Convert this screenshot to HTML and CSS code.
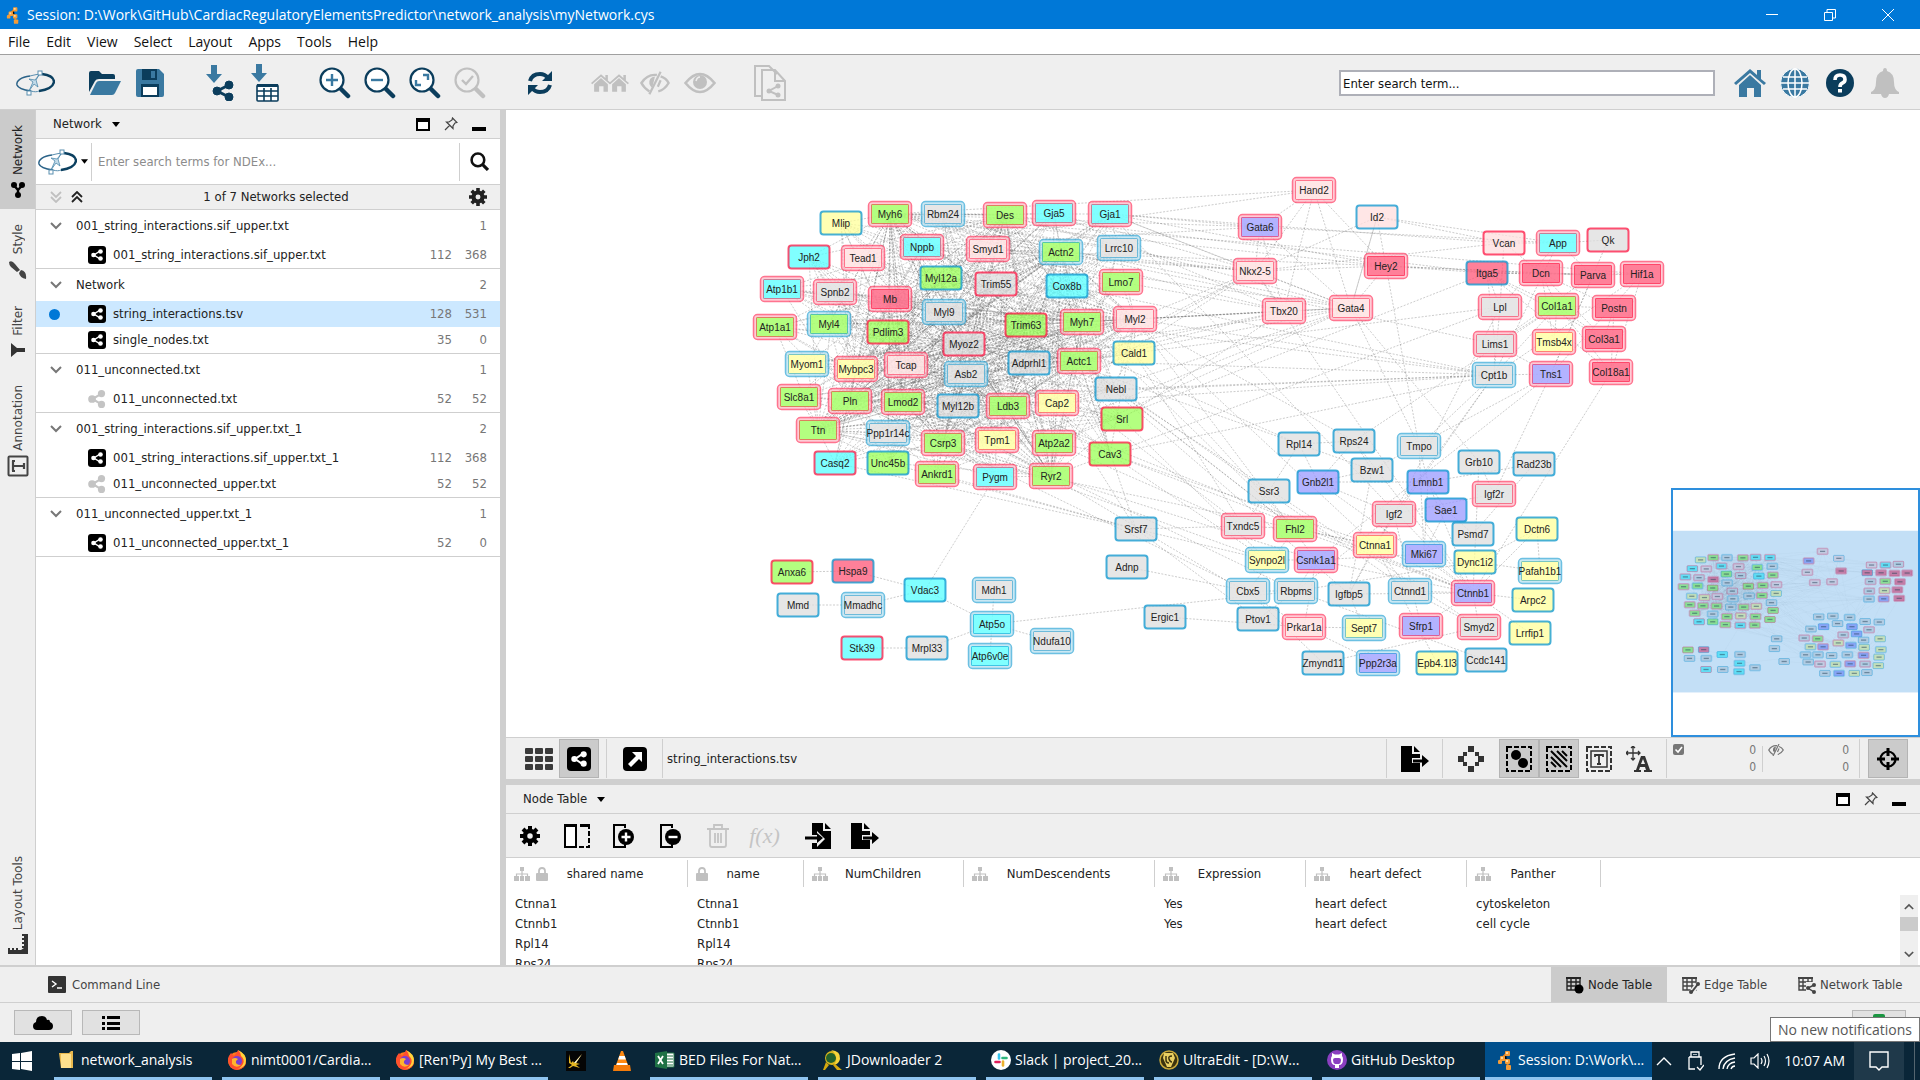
FILE: index.html
```html
<!DOCTYPE html>
<html lang="en">
<head>
<meta charset="utf-8">
<title>Session: D:\Work\GitHub\CardiacRegulatoryElementsPredictor\network_analysis\myNetwork.cys</title>
<link rel="stylesheet" href="styles.css">
</head>
<body>
<svg class="sprite" aria-hidden="true">
  <symbol id="i-cy" viewBox="0 0 16 20"><g stroke="#d9822b" stroke-width="2"><path d="M9 4 5 8l5 3M5 8l-2 3M10 11l1 6"/></g><g fill="#f39c38"><rect x="8" y="1" width="5" height="5" rx="1"/><rect x="3" y="6" width="5" height="5" rx="1"/><rect x="8" y="9" width="5" height="5" rx="1"/><rect x="1" y="10" width="4" height="4" rx="1"/><rect x="9" y="15" width="5" height="5" rx="1"/></g><path d="M9 2h2v2H9zM4 7h2v2H4zM9 10h2v2H9z" fill="#fbd9a0"/></symbol>
  <symbol id="i-ndex" viewBox="0 0 40 26"><g fill="none" stroke="#2a6288"><path d="M15 6C6 7 1 11 2 15c1 3 7 5 14 6" stroke-width="1.500"/><path d="M27 4c8 1 12 4 12 8-1 5-8 8-15 9" stroke="#0b4060" stroke-width="2.400"/><path d="M15 6c4-1 8-2 12-2M16 21c3 1 6 1 8 0" stroke="#5b8fb0" stroke-width="1"/></g><g fill="#fff" stroke="#5b8fb0"><rect x="23" y="1" width="4" height="4"/><rect x="12" y="21" width="4" height="4"/></g><path d="m24 5-3 5 2 7-4-3-5 7 4-9-4-3 6 1z" fill="#c4dcea" stroke="#3b7ca3" stroke-width=".7"/></symbol>
  <symbol id="i-open" viewBox="0 0 32 24"><path d="M0 21V2q0-2 2-2h8l3 3h11q2 0 2 2v3H10q-3 0-4 2z" fill="#0b3d5c"/><path d="M1 24 7 12q1-2 3-2h22l-6 12q-1 2-3 2z" fill="#3a79a1"/></symbol>
  <symbol id="i-save" viewBox="0 0 28 28"><path d="M2 0h21l5 5v21q0 2-2 2H2q-2 0-2-2V2q0-2 2-2z" fill="#3a79a1"/><path d="M6 0h15v11H6zM5 15h18v13H5z" fill="#0b3d5c"/><path d="M15 2h4v7h-4z" fill="#3a79a1"/><path d="M7 18h14v8H7z" fill="#fff"/></symbol>
  <symbol id="i-share" viewBox="0 0 20 20"><path d="M15 4 5 10l10 6" fill="none" stroke="currentColor" stroke-width="2.400"/><circle cx="15" cy="4" r="4" fill="currentColor"/><circle cx="4.500" cy="10" r="4.300" fill="currentColor"/><circle cx="15" cy="16" r="4" fill="currentColor"/></symbol>
  <symbol id="i-impnet" viewBox="0 0 28 36"><path d="M5 0h6v9h5l-8 9-8-9h5z" fill="#3a79a1"/><g fill="#0b3d5c" stroke="#0b3d5c"><path d="m23 20-12 6 12 6" fill="none" stroke-width="3"/><circle cx="23" cy="20" r="4"/><circle cx="11" cy="26" r="4"/><circle cx="23" cy="32" r="4"/></g></symbol>
  <symbol id="i-imptab" viewBox="0 0 28 38"><path d="M5 0h6v9h5l-8 9-8-9h5z" fill="#3a79a1"/><g fill="#fff" stroke="#0b3d5c" stroke-width="1.600"><rect x="6" y="21" width="21" height="16" rx="1"/><path d="M6 27h21M6 32h21M13 24v13M20 24v13"/></g><path d="M6 20h21v3H6z" fill="#0b3d5c"/></symbol>
  <symbol id="i-lens" viewBox="0 0 32 32"><circle cx="13" cy="13" r="11.500" fill="#fff" stroke="currentColor" stroke-width="2.200"/><path d="m22 22 7 7" stroke="currentColor" stroke-width="4.500" stroke-linecap="round"/></symbol>
  <symbol id="i-zin" viewBox="0 0 32 32"><use href="#i-lens"/><path d="M13 7v12M7 13h12" stroke="#3a79a1" stroke-width="2.400"/></symbol>
  <symbol id="i-zout" viewBox="0 0 32 32"><use href="#i-lens"/><path d="M7 13h12" stroke="#3a79a1" stroke-width="2.400"/></symbol>
  <symbol id="i-zfit" viewBox="0 0 32 32"><use href="#i-lens"/><path d="M14 8h5v5M12 18H7v-5" fill="none" stroke="#3a79a1" stroke-width="2.400"/></symbol>
  <symbol id="i-zsel" viewBox="0 0 32 32"><circle cx="13" cy="13" r="11.500" fill="none" stroke="currentColor" stroke-width="2.200"/><path d="m22 22 7 7" stroke="currentColor" stroke-width="4.500" stroke-linecap="round"/><path d="m8 13 4 4 7-8" fill="none" stroke="currentColor" stroke-width="2.400"/></symbol>
  <symbol id="i-refresh" viewBox="0 0 24 24"><g fill="none" stroke="currentColor" stroke-width="4"><path d="M2 10q2-7 10-7 5 0 8 4"/><path d="M22 14q-2 7-10 7-5 0-8-4"/></g><path d="M24 0v10H14zM0 24V14h10z" fill="currentColor"/></symbol>
  <symbol id="i-house" viewBox="0 0 32 28"><path d="M16 0 0 14l2 2L16 4l14 12 2-2-5-4V1h-4v5z" fill="currentColor"/><path d="m16 6 11 10v12h-7v-9h-7v9H5V16z" fill="currentColor"/></symbol>
  <symbol id="i-houses" viewBox="0 0 38 18"><use href="#i-house" x="0" y="0" width="20" height="18"/><use href="#i-house" x="18" y="0" width="20" height="18"/></symbol>
  <symbol id="i-eye" viewBox="0 0 32 22"><path d="M1.500 11Q16-7 30.500 11 16 29 1.500 11z" fill="none" stroke="currentColor" stroke-width="2.600"/><circle cx="16" cy="10" r="7" fill="currentColor"/><path d="M12 9q1-4 4-4" fill="none" stroke="#eee" stroke-width="1.500"/></symbol>
  <symbol id="i-noeye" viewBox="0 0 32 24"><path d="M10 21Q4 17 1.500 12 8 2 18 3.500M22 5q6 2 8.500 7-4 7-11 9" fill="none" stroke="currentColor" stroke-width="2.600"/><path d="M16 5q-7 1-6 8 1 3 3 4z" fill="currentColor"/><path d="M22 0 10 24M19 16l3-7" stroke="currentColor" stroke-width="2.400"/></symbol>
  <symbol id="i-docs" viewBox="0 0 32 36"><g fill="none" stroke="currentColor" stroke-width="2"><path d="M7 31H1V1h14l8 8"/><path d="M8 5h13l10 11v19H8zM21 5v11h10"/><path d="m24 21-9 5 9 4"/></g><g fill="currentColor"><circle cx="24" cy="21" r="2.500"/><circle cx="15" cy="26" r="2.500"/><circle cx="24" cy="30" r="2.500"/></g></symbol>
  <symbol id="i-globe" viewBox="0 0 30 30"><circle cx="15" cy="15" r="14.500" fill="#3a79a1" stroke="#fff"/><g fill="none" stroke="#fff" stroke-width="1.500"><ellipse cx="15" cy="15" rx="7" ry="14"/><path d="M15 1v28M3 9h24M3 21h24M1 15h28"/></g></symbol>
  <symbol id="i-help" viewBox="0 0 28 28"><circle cx="14" cy="14" r="14" fill="#0b3d5c"/><path d="M9 11q0-5 5-5t5 4.500q0 2.500-2.500 3.500T14 18" fill="none" stroke="#fff" stroke-width="3.600"/><path d="M12 20h4v3.500h-4z" fill="#fff"/></symbol>
  <symbol id="i-bell" viewBox="0 0 28 30"><path d="M14 0q2 0 2 3 7 2 7 11 0 8 5 10v2H0v-2q5-2 5-10 0-9 7-11 0-3 2-3zM10 26h8q-1 4-4 4t-4-4z" fill="currentColor"/></symbol>
  <symbol id="i-max" viewBox="0 0 14 13"><path d="M1 1h12v11H1z" fill="#fff" stroke="#000" stroke-width="2"/><path d="M0 0h14v4H0z"/></symbol>
  <symbol id="i-pin" viewBox="0 0 14 14"><path d="m8.500 1 4.500 4.500-2 .5-2 3v2.500L2.500 5H5l3-2zM5.500 8.500 1 13" fill="none" stroke="#444" stroke-width="1.200"/></symbol>
  <symbol id="i-min" viewBox="0 0 14 13"><path d="M0 9h14v4H0z"/></symbol>
  <symbol id="i-search" viewBox="0 0 18 18"><circle cx="7.500" cy="7.500" r="6" fill="none" stroke="#111" stroke-width="2.400"/><path d="m12 12 5 5" stroke="#111" stroke-width="3"/></symbol>
  <symbol id="i-gear" viewBox="0 0 20 20"><circle cx="10" cy="10" r="5" fill="none" stroke="currentColor" stroke-width="4.500"/><path d="M10 0v4M10 16v4M0 10h4M16 10h4M3 3l3 3M14 14l3 3M17 3l-3 3M6 14l-3 3" stroke="currentColor" stroke-width="4"/></symbol>
  <symbol id="i-dbl" viewBox="0 0 12 12"><path d="m1 6 5-5 5 5M1 11l5-5 5 5" fill="none" stroke="currentColor" stroke-width="1.800"/></symbol>
  <symbol id="i-chev" viewBox="0 0 12 8"><path d="m1 1 5 5 5-5" fill="none" stroke="currentColor" stroke-width="2"/></symbol>
  <symbol id="i-caret" viewBox="0 0 8 5"><path d="M0 0h8L4 5z"/></symbol>
  <symbol id="i-sharebox" viewBox="0 0 18 18"><rect width="18" height="18" rx="3"/><path d="M12 5 6 9l6 4" fill="none" stroke="#fff" stroke-width="1.500"/><g fill="#fff"><circle cx="12.500" cy="5.500" r="2.300"/><circle cx="5.500" cy="9" r="2.300"/><circle cx="12.500" cy="12.500" r="2.300"/></g></symbol>
  <symbol id="i-tabnet" viewBox="0 0 14 16"><path d="m2.500 3 4.500 5v5M11.500 3 7 8" fill="none" stroke="#000" stroke-width="2.400"/><circle cx="3" cy="3" r="3"/><circle cx="11" cy="3" r="3"/><circle cx="7" cy="13" r="3"/></symbol>
  <symbol id="i-brush" viewBox="0 0 18 18"><path d="M0 1q3-2 6 2l5 6-3 2-6-5Q0 4 0 1zM12 9q6 1 5 9-6-1-7-6z" fill="#444"/></symbol>
  <symbol id="i-funnel" viewBox="0 0 14 14"><path d="M0 0v14l6-5h8V5H6z" fill="#333"/></symbol>
  <symbol id="i-annot" viewBox="0 0 22 22"><rect x="1.500" y="1.500" width="19" height="19" rx="1" fill="none" stroke="#444" stroke-width="2"/><path d="M6 6v10M6 11h11M17 8v6M5 6h3M5 16h3" stroke="#444" stroke-width="2.200" fill="none"/></symbol>
  <symbol id="i-ruler" viewBox="0 0 20 20"><path d="M14 0h6v20H0v-6h2v2h2v-2h2v2h2v-2h2v2h3L16 14h-2v-2h2v-2h-2V8h2V6h-2V4h2V2h-2z" fill="#333"/></symbol>
  <symbol id="i-grid" viewBox="0 0 28 22"><g fill="#3a3a3a"><rect width="8" height="6" rx="1"/><rect x="10" width="8" height="6" rx="1"/><rect x="20" width="8" height="6" rx="1"/><rect y="8" width="8" height="6" rx="1"/><rect x="10" y="8" width="8" height="6" rx="1"/><rect x="20" y="8" width="8" height="6" rx="1"/><rect y="16" width="8" height="6" rx="1"/><rect x="10" y="16" width="8" height="6" rx="1"/><rect x="20" y="16" width="8" height="6" rx="1"/></g></symbol>
  <symbol id="i-ext" viewBox="0 0 24 24"><rect width="24" height="24" rx="4"/><path d="M9 5h10v10l-3-3-8 8-3-3 8-8z" fill="#fff"/></symbol>
  <symbol id="i-export" viewBox="0 0 28 26"><path d="M0 0h11v8h8v4h-8v5h8v9H0z"/><path d="M13 0l6 6h-6zM12 13.500h9V9l7 6-7 6v-4.500h-9z"/></symbol>
  <symbol id="i-import" viewBox="0 0 26 26"><path d="M7 0h11v8h8v18H7v-6h5v4l8-8-8-8v4H7zM20 0l6 6h-6z"/><path d="M0 13.500h12V10l6 5-6 5v-3.500H0z"/></symbol>
  <symbol id="i-diamond" viewBox="0 0 26 26"><g fill="#333"><path d="M10 0h6v6h-6zM10 20h6v6h-6zM0 10h6v6H0zM20 10h6v6h-6z"/><path d="M5 6h4v4H5zM17 6h4v4h-4zM5 16h4v4H5zM17 16h4v4h-4z"/></g></symbol>
  <symbol id="i-selnode" viewBox="0 0 26 26"><rect x="1" y="1" width="24" height="24" fill="none" stroke="#000" stroke-width="2" stroke-dasharray="5 2"/><circle cx="10" cy="9" r="5"/><circle cx="17" cy="17" r="5"/></symbol>
  <symbol id="i-seledge" viewBox="0 0 26 26"><rect x="1" y="1" width="24" height="24" fill="none" stroke="#000" stroke-width="2" stroke-dasharray="5 2"/><path d="m5 5 16 16M11 5l10 10M5 11l10 10M16 5l5 5M5 16l5 5" stroke="#000" stroke-width="2"/></symbol>
  <symbol id="i-selann" viewBox="0 0 26 26"><rect x="1" y="1" width="24" height="24" fill="none" stroke="#333" stroke-width="2" stroke-dasharray="5 2"/><rect x="5" y="5" width="16" height="16" fill="none" stroke="#333" stroke-width="1.500"/><path d="M9 11V9h8v2M13 9v9M11 18h4" fill="none" stroke="#333" stroke-width="1.800"/></symbol>
  <symbol id="i-lblmove" viewBox="0 0 26 26"><path d="M7 0v14M0 7h14M5 2l2-2 2 2M5 12l2 2 2-2M2 5 0 7l2 2M12 5l2 2-2 2" fill="none" stroke="#333" stroke-width="1.300"/><path d="M8 26v-2h2l5-14h4l5 14h2v2h-8v-2h2l-1-3h-5l-1 3h2v2zm7-8h4l-2-5z" fill="#333"/></symbol>
  <symbol id="i-check" viewBox="0 0 11 11"><rect width="11" height="11" rx="2" fill="#777"/><path d="m2.500 5.500 2.500 2.500 4-5" fill="none" stroke="#fff" stroke-width="1.600"/></symbol>
  <symbol id="i-target" viewBox="0 0 22 22"><circle cx="11" cy="11" r="7.500" fill="none" stroke="#000" stroke-width="2.200"/><path d="M11 0v8M11 14v8M0 11h8M14 11h8" stroke="#000" stroke-width="3"/></symbol>
  <symbol id="i-cols" viewBox="0 0 26 24"><path d="M1 2h11v21H1z" fill="#fff" stroke="#000" stroke-width="2"/><path d="M0 0h13v3H0zM16 0h10v3H16z"/><path d="M15 23h10V3" fill="none" stroke="#000" stroke-width="2" stroke-dasharray="5 2"/></symbol>
  <symbol id="i-colplus" viewBox="0 0 22 24"><path d="M12 4V1H1v22h11v-3" fill="none" stroke="#000" stroke-width="2"/><circle cx="13" cy="13" r="8"/><path d="M13 8.500v9M8.500 13h9" stroke="#fff" stroke-width="2.400"/></symbol>
  <symbol id="i-colminus" viewBox="0 0 22 24"><path d="M12 4V1H1v22h11v-3" fill="none" stroke="#000" stroke-width="2"/><circle cx="13" cy="13" r="8"/><path d="M8.500 13h9" stroke="#fff" stroke-width="2.400"/></symbol>
  <symbol id="i-trash" viewBox="0 0 22 24"><path d="M0 5h22M7 5V1h8v4M3 5v16q0 2 2 2h12q2 0 2-2V5M8 9v10M11 9v10M14 9v10" fill="none" stroke="currentColor" stroke-width="1.800"/></symbol>
  <symbol id="i-tree" viewBox="0 0 16 14"><path d="M8 4v6M2.500 10V7h11v3" fill="none" stroke="currentColor" stroke-width="1.200"/><path d="M6 0h4v4H6zM0 9h5v5H0zM6 9h4v5H6zM11 9h5v5h-5z" fill="currentColor"/></symbol>
  <symbol id="i-lock" viewBox="0 0 12 14"><path d="M3 7V4q0-3 3-3t3 3v3" fill="none" stroke="currentColor" stroke-width="1.800"/><rect y="6" width="12" height="8" rx="1" fill="currentColor"/></symbol>
  <symbol id="i-tbl" viewBox="0 0 18 18"><path d="M1 2v12h13V2zM1 6h13M1 10h13M5 2v12M10 2v12" fill="none" stroke="currentColor" stroke-width="1.400"/><path d="M0 1h15v2H0z" fill="currentColor"/></symbol>
  <symbol id="i-term" viewBox="0 0 18 17"><rect width="18" height="17" rx="1" fill="#333"/><path d="m4 5 4 3-4 3M9 12h5" fill="none" stroke="#fff" stroke-width="1.400"/></symbol>
  <symbol id="i-cloud" viewBox="0 0 20 14"><path d="M4 14q-4 0-4-4 0-3 3-4 0-6 6-6 4 0 5 4 3-1 3 2 3 1 3 4 0 4-4 4z"/></symbol>
  <symbol id="i-list" viewBox="0 0 18 14"><path d="M5 0h13v3H5zM5 6h13v3H5zM5 11h13v3H5zM0 0h3v3H0zM0 6h3v3H0zM0 11h3v3H0z"/></symbol>
  <symbol id="i-win" viewBox="0 0 20 20"><path d="m0 3 8-1v8H0zM9 2l11-2v10H9zM0 11h8v8l-8-1zM9 11h11v9L9 18z" fill="#fff"/></symbol>
  <symbol id="i-folder" viewBox="0 0 14 18"><path d="M0 2h10l2-2h2v17H2z" fill="#e9b94e"/><path d="M2 3h10v14H2z" fill="#fde08d"/></symbol>
  <symbol id="i-fox" viewBox="0 0 20 20"><circle cx="10" cy="11" r="9" fill="#ff7a1c"/><path d="M1 9q1-4 3-6l3 3q3-3 4-6 8 5 8 11 0 8-9 9-9-1-9-11z" fill="#ff4f2e"/><path d="M11 0q3 3 3 6 4 3 2 8-2 4-6 5 9-1 9-9 0-6-8-10z" fill="#ffd33a"/><circle cx="10" cy="11" r="5" fill="#7a3fd0"/><path d="M5 9q3-2 6 0l-2 2q-1 4 5 4-5 4-9-1z" fill="#ffb52e"/></symbol>
  <symbol id="i-kmp" viewBox="0 0 20 20"><path d="M0 0h20v20H0z" fill="#050505"/><path d="M3 3l2 9 2-2 1 2 8-9-6 9 4 1-4 1 4 3-7-2-3 2H2l4-3-3-2z" fill="#e8b923"/><path d="m8 12 8-9-6 9z" fill="#f5f0d0"/></symbol>
  <symbol id="i-vlc" viewBox="0 0 18 20"><path d="M8 0h2l5 14H3z" fill="#ff8a12"/><path d="m6.300 5 5.400 0 1.200 3.500H5.200zM4 12h10l.7 2H3.300z" fill="#fff"/><path d="M1 14h16l1 6H0z" fill="#f47b0a"/></symbol>
  <symbol id="i-xls" viewBox="0 0 20 18"><path d="M10 2h9v14h-9z" fill="#fff" stroke="#1e7145"/><path d="M12 5h6M12 8h6M12 11h6M12 14h6" stroke="#1e7145"/><path d="m0 2 12-2v18L0 16z" fill="#1e7145"/><path d="m3 5 5 8M8 5l-5 8" stroke="#fff" stroke-width="1.800"/></symbol>
  <symbol id="i-jd" viewBox="0 0 20 20"><circle cx="9" cy="8" r="7" fill="#d8b51c"/><circle cx="8" cy="8" r="5" fill="#23612c"/><path d="M8 0q10 1 9 9-1 5-6 6 3-4 2-8-1-5-5-7z" fill="#f6d53c"/><path d="m3 12 3 3-4 5H0zM12 14l7 6h-5l-4-5z" fill="#d6a80e"/></symbol>
  <symbol id="i-slack" viewBox="0 0 20 20"><circle cx="10" cy="10" r="10" fill="#fff"/><g stroke-width="2.600" stroke-linecap="round"><path d="M8 4.500v4" stroke="#36c5f0"/><path d="M15.500 8h-4" stroke="#2eb67d"/><path d="M12 15.500v-4" stroke="#ecb22e"/><path d="M4.500 12h4" stroke="#e01e5a"/></g></symbol>
  <symbol id="i-ue" viewBox="0 0 20 20"><circle cx="10" cy="10" r="9" fill="#3b330f" stroke="#c9a93a" stroke-width="1.500"/><path d="M5 3h9l2 5-4 9H8L4 8z" fill="#e8cf62"/><path d="M7 6v4q0 3 3 3M13 6q-4 0-3 3t3 3" fill="none" stroke="#3b330f" stroke-width="1.500"/></symbol>
  <symbol id="i-gh" viewBox="0 0 20 20"><circle cx="10" cy="10" r="10" fill="#8a3fc0"/><path d="M8 18v-3q-4 0-4-6 0-2 1-3V3l3 1.500h4L15 3v3q1 1 1 3 0 6-4 6v3z" fill="#fff"/><path d="M8 14q-2-1-2-4 0-2 2-2h4q2 0 2 2 0 3-2 4z" fill="#8a3fc0"/></symbol>
  <symbol id="i-usb" viewBox="0 0 18 20"><path d="M5 6V1h8v5M3 6h12v8M3 6v12h6M11 16l3 3 4-5M8 3v1M10 3v1" fill="none" stroke="#fff" stroke-width="1.300"/></symbol>
  <symbol id="i-wifi" viewBox="0 0 18 18"><g fill="none" stroke="#fff" stroke-width="1.300"><path d="M1 17Q1 4 17 2"/><path d="M5 17Q6 8 17 6"/><path d="M9 17q1-6 8-7"/><path d="M13 17q1-3 4-3"/></g></symbol>
  <symbol id="i-snd" viewBox="0 0 20 16"><path d="M1 5h3l4-4v14l-4-4H1zM11 5q2 3 0 6M14 3q3 5 0 10M17 1q4 7 0 14" fill="none" stroke="#fff" stroke-width="1.200"/></symbol>
  <symbol id="i-note" viewBox="0 0 20 20"><path d="M1 1h18v15h-6l-3 3-3-3H1z" fill="none" stroke="#fff" stroke-width="1.400"/></symbol>
</svg>

<div class="app">
  <header class="titlebar">
    <svg class="ico" width="14" height="18"><use href="#i-cy"/></svg>
    <h1 class="title">Session: D:\Work\GitHub\CardiacRegulatoryElementsPredictor\network_analysis\myNetwork.cys</h1>
    <div class="winbtns">
      <button class="winbtn" aria-label="Minimize"><svg width="12" height="12"><path d="M0 5.500h12" stroke="#fff"/></svg></button>
      <button class="winbtn" aria-label="Restore"><svg width="12" height="12"><path d="M.5 3.500h8v8h-8zM3 3V.5h8.500V9H9" fill="none" stroke="#fff"/></svg></button>
      <button class="winbtn" aria-label="Close"><svg width="12" height="12"><path d="m0 0 12 12M12 0 0 12" stroke="#fff"/></svg></button>
    </div>
  </header>

  <nav class="menubar">
    <button>File</button><button>Edit</button><button>View</button><button>Select</button><button>Layout</button><button>Apps</button><button>Tools</button><button>Help</button>
  </nav>

  <div class="toolbar">
    <div class="group"><button class="tool" aria-label="NDEx"><svg width="40" height="26"><use href="#i-ndex"/></svg></button></div>
    <div class="group">
      <button class="tool" aria-label="Open"><svg width="32" height="24"><use href="#i-open"/></svg></button>
      <button class="tool" aria-label="Save"><svg width="28" height="28"><use href="#i-save"/></svg></button>
    </div>
    <div class="group">
      <button class="tool" aria-label="Import network"><svg width="28" height="36"><use href="#i-impnet"/></svg></button>
      <button class="tool" aria-label="Import table"><svg width="28" height="38"><use href="#i-imptab"/></svg></button>
    </div>
    <div class="group">
      <button class="tool" aria-label="Zoom in"><svg width="32" height="32"><use href="#i-zin"/></svg></button>
      <button class="tool" aria-label="Zoom out"><svg width="32" height="32"><use href="#i-zout"/></svg></button>
      <button class="tool" aria-label="Fit content"><svg width="32" height="32"><use href="#i-zfit"/></svg></button>
      <button class="tool off" aria-label="Fit selected"><svg width="32" height="32"><use href="#i-zsel"/></svg></button>
    </div>
    <div class="group"><button class="tool" aria-label="Apply layout"><svg width="24" height="24"><use href="#i-refresh"/></svg></button></div>
    <div class="group">
      <button class="tool off" aria-label="First neighbors"><svg width="38" height="18"><use href="#i-houses"/></svg></button>
      <button class="tool off" aria-label="Hide selected"><svg width="30" height="24"><use href="#i-noeye"/></svg></button>
      <button class="tool off" aria-label="Show all"><svg width="32" height="22"><use href="#i-eye"/></svg></button>
    </div>
    <div class="group"><button class="tool off" aria-label="New network from selection"><svg width="32" height="36"><use href="#i-docs"/></svg></button></div>
    <input class="search" type="text" value="Enter search term..." aria-label="Search">
    <button class="tool mid" aria-label="Home"><svg width="32" height="28"><use href="#i-house"/></svg></button>
    <button class="tool" aria-label="Web"><svg width="30" height="30"><use href="#i-globe"/></svg></button>
    <button class="tool" aria-label="Help"><svg width="28" height="28"><use href="#i-help"/></svg></button>
    <button class="tool off" aria-label="Notifications"><svg width="28" height="30"><use href="#i-bell"/></svg></button>
  </div>

  <main class="main">
    <nav class="rail">
      <button class="railtab active"><svg width="14" height="16"><use href="#i-tabnet"/></svg><span>Network</span></button>
      <button class="railtab style"><svg width="18" height="18"><use href="#i-brush"/></svg><span>Style</span></button>
      <button class="railtab filter"><svg width="14" height="14"><use href="#i-funnel"/></svg><span>Filter</span></button>
      <button class="railtab annot"><svg width="22" height="22"><use href="#i-annot"/></svg><span>Annotation</span></button>
      <button class="railtab last"><svg width="20" height="20"><use href="#i-ruler"/></svg><span>Layout Tools</span></button>
    </nav>

    <section class="netpanel">
      <div class="panelhead">
        <button class="paneltitle">Network <svg width="8" height="5"><use href="#i-caret"/></svg></button>
        <button class="mini" aria-label="Float"><svg width="14" height="13"><use href="#i-max"/></svg></button>
        <button class="mini" aria-label="Pin"><svg width="14" height="14"><use href="#i-pin"/></svg></button>
        <button class="mini" aria-label="Minimize"><svg width="14" height="13"><use href="#i-min"/></svg></button>
      </div>
      <div class="ndex">
        <button class="ndexpick" aria-label="Search provider"><svg width="40" height="26"><use href="#i-ndex"/></svg><svg width="7" height="5"><use href="#i-caret"/></svg></button>
        <input type="text" placeholder="Enter search terms for NDEx..." aria-label="NDEx search">
        <button class="ndexgo" aria-label="Search"><svg width="19" height="19"><use href="#i-search"/></svg></button>
      </div>
      <div class="selbar">
        <button class="off" aria-label="Expand all"><svg class="flip" width="12" height="12"><use href="#i-dbl"/></svg></button>
        <button aria-label="Collapse all"><svg width="12" height="12"><use href="#i-dbl"/></svg></button>
        <span class="selinfo">1 of 7 Networks selected</span>
        <button class="geartop" aria-label="Options"><svg width="18" height="18"><use href="#i-gear"/></svg></button>
      </div>
      <ul class="tree">
        <li class="coll"><div class="crow"><svg width="12" height="8"><use href="#i-chev"/></svg><span class="nm">001_string_interactions.sif_upper.txt</span><span class="n">1</span></div>
          <div class="nrow"><svg width="18" height="18"><use href="#i-sharebox"/></svg><span class="nm">001_string_interactions.sif_upper.txt</span><span class="n">112</span><span class="n e">368</span></div></li>
        <li class="coll"><div class="crow"><svg width="12" height="8"><use href="#i-chev"/></svg><span class="nm">Network</span><span class="n">2</span></div>
          <div class="nrow sel"><svg width="18" height="18"><use href="#i-sharebox"/></svg><span class="nm">string_interactions.tsv</span><span class="n">128</span><span class="n e">531</span></div>
          <div class="nrow"><svg width="18" height="18"><use href="#i-sharebox"/></svg><span class="nm">single_nodes.txt</span><span class="n">35</span><span class="n e">0</span></div></li>
        <li class="coll"><div class="crow"><svg width="12" height="8"><use href="#i-chev"/></svg><span class="nm">011_unconnected.txt</span><span class="n">1</span></div>
          <div class="nrow"><svg class="noview" width="18" height="18"><use href="#i-share"/></svg><span class="nm">011_unconnected.txt</span><span class="n">52</span><span class="n e">52</span></div></li>
        <li class="coll"><div class="crow"><svg width="12" height="8"><use href="#i-chev"/></svg><span class="nm">001_string_interactions.sif_upper.txt_1</span><span class="n">2</span></div>
          <div class="nrow"><svg width="18" height="18"><use href="#i-sharebox"/></svg><span class="nm">001_string_interactions.sif_upper.txt_1</span><span class="n">112</span><span class="n e">368</span></div>
          <div class="nrow"><svg class="noview" width="18" height="18"><use href="#i-share"/></svg><span class="nm">011_unconnected_upper.txt</span><span class="n">52</span><span class="n e">52</span></div></li>
        <li class="coll"><div class="crow"><svg width="12" height="8"><use href="#i-chev"/></svg><span class="nm">011_unconnected_upper.txt_1</span><span class="n">1</span></div>
          <div class="nrow"><svg width="18" height="18"><use href="#i-sharebox"/></svg><span class="nm">011_unconnected_upper.txt_1</span><span class="n">52</span><span class="n e">0</span></div></li>
      </ul>
    </section>

    <div class="work">
      <section class="view">
        <svg class="graph" id="graph" viewBox="506 110 1414 627" preserveAspectRatio="xMidYMid meet"></svg>
        <svg class="birdseye" id="birdseye" viewBox="734 -48 950 950"></svg>
      </section>
      <div class="viewbar">
        <button class="vb first" aria-label="Grid"><svg width="28" height="22"><use href="#i-grid"/></svg></button>
        <button class="vb on" aria-label="Network view"><svg width="24" height="24"><use href="#i-sharebox"/></svg></button>
        <i class="sep"></i>
        <button class="vb" aria-label="Detach view"><svg width="24" height="24"><use href="#i-ext"/></svg></button>
        <i class="sep tight"></i>
        <span class="viewname">string_interactions.tsv</span>
        <i class="sep"></i>
        <button class="vb" aria-label="Export"><svg width="28" height="26"><use href="#i-export"/></svg></button>
        <i class="sep"></i>
        <button class="vb gap" aria-label="Graphics details"><svg width="26" height="26"><use href="#i-diamond"/></svg></button>
        <button class="vb on" aria-label="Select nodes"><svg width="26" height="26"><use href="#i-selnode"/></svg></button>
        <button class="vb on" aria-label="Select edges"><svg width="26" height="26"><use href="#i-seledge"/></svg></button>
        <button class="vb" aria-label="Select annotations"><svg width="26" height="26"><use href="#i-selann"/></svg></button>
        <button class="vb" aria-label="Move labels"><svg width="26" height="26"><use href="#i-lblmove"/></svg></button>
        <i class="sep end"></i>
        <div class="count"><svg width="11" height="11"><use href="#i-check"/></svg><span>0<br>0</span></div>
        <i class="sep short"></i>
        <div class="count hidden"><svg width="16" height="12"><use href="#i-noeye"/></svg><span>0<br>0</span></div>
        <i class="sep last"></i>
        <button class="vb on" aria-label="Bird's eye"><svg width="22" height="22"><use href="#i-target"/></svg></button>
      </div>
      <section class="tablepanel">
        <div class="panelhead">
          <button class="paneltitle">Node Table <svg width="8" height="5"><use href="#i-caret"/></svg></button>
          <button class="mini" aria-label="Float"><svg width="14" height="13"><use href="#i-max"/></svg></button>
          <button class="mini" aria-label="Pin"><svg width="14" height="14"><use href="#i-pin"/></svg></button>
          <button class="mini" aria-label="Minimize"><svg width="14" height="13"><use href="#i-min"/></svg></button>
        </div>
        <div class="tabletools">
          <button aria-label="Options"><svg width="20" height="20"><use href="#i-gear"/></svg></button>
          <button aria-label="Columns"><svg width="26" height="24"><use href="#i-cols"/></svg></button>
          <button aria-label="Create column"><svg width="22" height="24"><use href="#i-colplus"/></svg></button>
          <button aria-label="Delete column"><svg width="22" height="24"><use href="#i-colminus"/></svg></button>
          <button class="off" aria-label="Delete table"><svg width="22" height="24"><use href="#i-trash"/></svg></button>
          <button class="off fx">f(x)</button>
          <button class="io" aria-label="Import"><svg width="26" height="26"><use href="#i-import"/></svg></button>
          <button aria-label="Export"><svg width="28" height="26"><use href="#i-export"/></svg></button>
        </div>
        <div class="tablewrap">
          <table>
            <colgroup><col class="c1"><col class="c2"><col class="c3"><col class="c4"><col class="c5"><col class="c6"><col class="c7"></colgroup>
            <thead><tr>
              <th><div><svg width="16" height="14"><use href="#i-tree"/></svg><svg width="12" height="14"><use href="#i-lock"/></svg><span>shared name</span></div></th>
              <th><div><svg width="12" height="14"><use href="#i-lock"/></svg><span>name</span></div></th>
              <th><div><svg width="16" height="14"><use href="#i-tree"/></svg><span>NumChildren</span></div></th>
              <th><div><svg width="16" height="14"><use href="#i-tree"/></svg><span>NumDescendents</span></div></th>
              <th><div><svg width="16" height="14"><use href="#i-tree"/></svg><span>Expression</span></div></th>
              <th><div><svg width="16" height="14"><use href="#i-tree"/></svg><span>heart defect</span></div></th>
              <th><div><svg width="16" height="14"><use href="#i-tree"/></svg><span>Panther</span></div></th>
            </tr></thead>
            <tbody>
              <tr><td>Ctnna1</td><td>Ctnna1</td><td></td><td></td><td>Yes</td><td>heart defect</td><td>cytoskeleton</td></tr>
              <tr><td>Ctnnb1</td><td>Ctnnb1</td><td></td><td></td><td>Yes</td><td>heart defect</td><td>cell cycle</td></tr>
              <tr><td>Rpl14</td><td>Rpl14</td><td></td><td></td><td></td><td></td><td></td></tr>
              <tr><td>Rps24</td><td>Rps24</td><td></td><td></td><td></td><td></td><td></td></tr>
            </tbody>
          </table>
          <div class="scroll">
            <button aria-label="Scroll up"><svg class="flip" width="10" height="7"><use href="#i-chev"/></svg></button>
            <i class="thumb"></i>
            <button aria-label="Scroll down"><svg width="10" height="7"><use href="#i-chev"/></svg></button>
          </div>
        </div>
      </section>
    </div>
  </main>

  <div class="bottomtabs">
    <button class="cmd"><svg width="18" height="17"><use href="#i-term"/></svg>Command Line</button>
    <button class="btab active"><svg width="18" height="18"><use href="#i-tbl"/><circle cx="13" cy="13" r="4.500"/></svg>Node Table</button>
    <button class="btab"><svg width="18" height="18"><use href="#i-tbl"/><path d="m9 17 7-9" stroke="#efefef" stroke-width="5"/><path d="m9 17 7-9" stroke="#444" stroke-width="2"/><circle cx="9" cy="16" r="2" fill="#444"/><circle cx="16" cy="8" r="2" fill="#444"/></svg>Edge Table</button>
    <button class="btab wide"><svg width="18" height="18"><use href="#i-tbl"/><path d="M18 6H8v12h10z" fill="#efefef"/><path d="m16 9-6 3 6 4" fill="none" stroke="#444" stroke-width="1.500"/><g fill="#444"><circle cx="16" cy="9" r="2"/><circle cx="10" cy="12" r="2"/><circle cx="16" cy="16" r="2"/></g></svg>Network Table</button>
  </div>

  <footer class="status">
    <button aria-label="Cloud"><svg width="20" height="14"><use href="#i-cloud"/></svg></button>
    <button aria-label="Tasks"><svg width="18" height="14"><use href="#i-list"/></svg></button>
    <button class="mem" aria-label="Memory"><svg width="12" height="16"><rect width="12" height="16" rx="2" fill="#1a9641"/></svg></button>
    <div class="tooltip" role="tooltip">No new notifications</div>
  </footer>

  <div class="taskbar">
    <button class="start" aria-label="Start"><svg width="20" height="20"><use href="#i-win"/></svg></button>
    <div class="apps">
      <button class="task"><svg width="14" height="18"><use href="#i-folder"/></svg><span>network_analysis</span></button>
      <button class="task"><svg width="20" height="20"><use href="#i-fox"/></svg><span>nimt0001/Cardia...</span></button>
      <button class="task"><svg width="20" height="20"><use href="#i-fox"/></svg><span>[Ren'Py] My Best ...</span></button>
      <button class="pinned" aria-label="KMPlayer"><svg width="20" height="20"><use href="#i-kmp"/></svg></button>
      <button class="pinned" aria-label="VLC"><svg width="18" height="20"><use href="#i-vlc"/></svg></button>
      <button class="task"><svg width="20" height="18"><use href="#i-xls"/></svg><span>BED Files For Nat...</span></button>
      <button class="task"><svg width="20" height="20"><use href="#i-jd"/></svg><span>JDownloader 2</span></button>
      <button class="task"><svg width="20" height="20"><use href="#i-slack"/></svg><span>Slack | project_20...</span></button>
      <button class="task"><svg width="20" height="20"><use href="#i-ue"/></svg><span>UltraEdit - [D:\W...</span></button>
      <button class="task"><svg width="20" height="20"><use href="#i-gh"/></svg><span>GitHub Desktop</span></button>
      <button class="task current"><svg width="16" height="20"><use href="#i-cy"/></svg><span>Session: D:\Work\...</span></button>
    </div>
    <div class="tray">
      <svg class="flip white" width="16" height="10" viewBox="0 0 16 10"><path d="m1 1 7 7 7-7" fill="none" stroke="#fff" stroke-width="1.400"/></svg>
      <svg width="18" height="20"><use href="#i-usb"/></svg>
      <svg width="18" height="18"><use href="#i-wifi"/></svg>
      <svg width="20" height="16"><use href="#i-snd"/></svg>
      <time>10:07 AM</time>
    </div>
    <button class="notes" aria-label="Action center"><svg width="20" height="20"><use href="#i-note"/></svg></button>
    <i class="peek"></i>
  </div>
</div>
<script src="graph.js"></script>
</body>
</html>
```
FILE: styles.css
```css
* { box-sizing: border-box; }
body { margin: 0; font: 13px/16px "DejaVu Sans Condensed", "DejaVu Sans", sans-serif; color: #222; background: #efefef; }
button { border: 0; padding: 0; margin: 0; background: none; font: inherit; color: inherit; display: flex; align-items: center; justify-content: center; }
input { font: inherit; }
svg { display: block; flex: none; }
.sprite { position: absolute; width: 0; height: 0; }
.flip { transform: rotate(180deg); }
.app { display: flex; flex-direction: column; height: 100vh; min-height: 600px; overflow: hidden; }

.titlebar { display: flex; align-items: center; height: 29px; padding-left: 6px; background: #0078d7; color: #fff; flex: none; }
.title { margin: 0 0 0 7px; font: 14px/20px "Open Sans", "Noto Sans", sans-serif; flex: 1; }
.winbtns { display: flex; padding-right: 3px; }
.winbtn { width: 58px; height: 29px; }

.menubar { display: flex; gap: 16px; height: 26px; padding: 0 8px; background: #fff; border-bottom: 1px solid #a0a0a0; flex: none; font: 14px/20px "Open Sans", "Noto Sans", sans-serif; color: #111; }

.toolbar { display: flex; align-items: center; height: 55px; padding: 2px 13px 0 12px; border-bottom: 1px solid #cfcfcf; flex: none; color: #0b3d5c; }
.group { display: flex; margin-right: 25px; }
.tool { width: 45px; height: 44px; }
.tool.mid { color: #3a79a1; margin-left: 12px; }
.off { color: #c0c0c0; }
.search { width: 376px; height: 26px; margin-left: auto; padding: 0 2px; border: 2px solid #aeb0b8; background: #fff; color: #111; }

.main { display: flex; flex: 1; min-height: 0; }
.rail { display: flex; flex-direction: column; width: 36px; border-right: 1px solid #cfcfcf; flex: none; }
.railtab { flex-direction: column-reverse; justify-content: flex-start; gap: 7px; width: 35px; padding-bottom: 11px; color: #444; }
.railtab span { writing-mode: vertical-rl; transform: rotate(180deg); font: 12px/18px "DejaVu Sans", sans-serif; }
.railtab.active { height: 99px; background: #cbcbcb; color: #222; }
.railtab.style { height: 81px; }
.railtab.filter { height: 78px; }
.railtab.annot { height: 120px; gap: 4px; }
.railtab.last { margin-top: auto; gap: 4px; }

.netpanel { width: 464px; background: #fff; flex: none; }
.panelhead { display: flex; height: 29px; padding-right: 7px; background: #efefef; border-bottom: 1px solid #cfcfcf; }
.paneltitle { gap: 10px; margin: 0 auto 0 17px; }
.mini { width: 28px; }
.ndex { display: flex; align-items: center; height: 46px; border-bottom: 1px solid #cfcfcf; }
.ndexpick { width: 56px; gap: 4px; height: 38px; padding-right: 2px; border-right: 1px solid #cfcfcf; }
.ndex input { flex: 1; height: 38px; border: 0; padding: 0 6px; outline: 0; }
.ndex input::placeholder { color: #8c8c8c; opacity: 1; }
.ndexgo { width: 41px; height: 38px; padding-right: 2px; border-left: 1px solid #cfcfcf; }
.selbar { display: flex; align-items: center; height: 25px; padding: 0 13px 0 14px; gap: 9px; background: #efefef; border-bottom: 1px solid #cfcfcf; }
.selinfo { flex: 1; text-align: center; }
.tree { list-style: none; margin: 0; padding: 0; }
.coll { border-bottom: 1px solid #cfcfcf; }
.crow, .nrow { display: flex; align-items: center; padding-right: 13px; }
.crow { height: 32px; padding-left: 14px; gap: 14px; color: #777; }
.nrow { height: 26px; padding-left: 52px; gap: 7px; position: relative; }
.nm { flex: 1; color: #222; }
.n { color: #777; text-align: right; }
.n.e { width: 28px; }
.noview { color: #c4c4c4; }
.sel { background: #cce8ff; }
.sel::before { content: ""; position: absolute; left: 13px; top: 8px; width: 11px; height: 11px; border-radius: 50%; background: #0078d7; }

.work { display: flex; flex-direction: column; flex: 1; min-width: 0; border-left: 6px solid #cfcfcf; }
.view { position: relative; flex: 1; min-height: 0; background: #fff; }
.graph { width: 100%; height: 100%; }
.birdseye { position: absolute; right: 0; bottom: 0; width: 249px; height: 249px; border: 2px solid #2e8fdd; background: #fff; }
.nodelabel { font: 10px "Liberation Sans", sans-serif; fill: #222; text-anchor: middle; }
.viewbar { display: flex; align-items: center; height: 42px; padding: 0 12px 0 13px; border-top: 1px solid #cfcfcf; flex: none; }
.vb { width: 40px; height: 39px; }
.vb.on { background: #cbcbcb; border: 1px solid #b4b4b4; }
.vb.gap { margin-right: 8px; }
.sep { width: 1px; height: 39px; margin: 0 8px 0 7px; background: #cfcfcf; }
.sep.tight { margin-right: 4px; }
.sep.end { margin-right: 0; }
.sep.short { height: 26px; margin: 0; }
.sep.last { margin-left: 0; }
.viewname { flex: 1; }
.count { display: flex; justify-content: space-between; width: 95px; padding: 1px 6px 0; color: #777; font-size: 12px; line-height: 17px; }
.count svg { margin-top: 2px; }
.count.hidden { width: 96px; padding: 1px 10px 0 5px; }

.tablepanel { border-top: 6px solid #cfcfcf; flex: none; }
.tabletools { display: flex; align-items: center; height: 44px; border-bottom: 1px solid #cfcfcf; color: #000; }
.tabletools button { width: 47px; height: 40px; }
.tabletools .off { color: #c4c4c4; }
.tabletools .io { margin-left: 6px; }
.tabletools .fx { font: italic 22px/24px "Liberation Serif", serif; }
.tablewrap { display: flex; height: 107px; overflow: hidden; background: #fff; }
table { table-layout: fixed; border-collapse: collapse; width: 1095px; }
.c1 { width: 182px; } .c2 { width: 116px; } .c3 { width: 160px; } .c4 { width: 191px; } .c5 { width: 151px; } .c6 { width: 161px; } .c7 { width: 134px; }
th { height: 36px; padding: 2px 0 7px; font-weight: normal; }
th div { display: flex; align-items: center; height: 27px; padding-left: 8px; gap: 6px; border-right: 1px solid #cfcfcf; color: #c0c0c0; }
th span { flex: 1; padding-right: 31px; text-align: center; color: #222; }
td { height: 20px; padding: 0 0 0 9px; }
.scroll { display: flex; flex-direction: column; width: 18px; margin: 37px 2px 0 auto; background: #efefef; color: #555; }
.scroll button { height: 22px; }
.thumb { height: 14px; margin-bottom: auto; background: #cbcbcb; }

.bottomtabs { display: flex; height: 38px; border-top: 2px solid #cfcfcf; border-bottom: 1px solid #cfcfcf; color: #444; flex: none; }
.cmd { gap: 6px; margin: 0 auto 0 48px; }
.btab { justify-content: flex-start; gap: 4px; width: 116px; padding-left: 15px; }
.btab.wide { width: 137px; }
.btab.active { background: #cbcbcb; color: #222; }
.status { display: flex; align-items: center; gap: 10px; height: 39px; padding: 0 14px; position: relative; flex: none; }
.status button { width: 58px; height: 25px; border: 1px solid #b8b8b8; background: #e1e1e1; color: #000; }
.status .mem { align-items: flex-start; width: 54px; margin-left: auto; padding-top: 3px; }
.tooltip { position: absolute; right: 0; bottom: 0; height: 25px; padding: 0 7px; border: 1px solid #767676; background: #fff; color: #575757; font: 14px/23px "Open Sans", "Noto Sans", sans-serif; }

.taskbar { display: flex; height: 38px; background: #0a2638; color: #fff; flex: none; font: 14px/20px "Open Sans", "Noto Sans", sans-serif; }
.start { width: 44px; }
.apps { display: flex; gap: 10px; margin-left: 10px; flex: 1; }
.task { width: 158px; justify-content: flex-start; gap: 4px; padding-left: 5px; border-bottom: 3px solid #8fc4ef; white-space: nowrap; overflow: hidden; }
.task:first-child { gap: 8px; }
.task.current { width: 167px; margin-left: -5px; padding-left: 12px; gap: 5px; background: #004f8c; }
.pinned { width: 36px; }
.tray { display: flex; align-items: center; gap: 14px; margin-right: 9px; }
.notes { width: 50px; background: #1f394a; }
.peek { width: 1px; margin: 0 5px 0 10px; background: #54656f; }
```
FILE: graph.js
```js
// name x y style: fill letter, then border (lower case single, upper case double; p pink, b blue)
const NODES = `Mlip 841 223 Yb,Myh6 890 214 GP,Rbm24 943 214 EB,Des 1005 215 GP,Gja5 1054 213 CP,Gja1 1110 214 CP,
Jph2 809 257 Cp,Tead1 863 258 PP,Nppb 922 247 CP,Smyd1 988 249 PP,Actn2 1061 252 GB,Lrrc10 1119 248 EB,
Atp1b1 782 289 CP,Spnb2 835 292 EP,Mb 890 299 RP,Myl12a 941 278 Gb,Trim55 996 284 Ep,Cox8b 1067 286 Cb,
Lmo7 1121 282 GP,Atp1a1 775 327 GP,Myl4 829 324 GB,Pdlim3 888 332 Gp,Myl9 944 312 EB,Trim63 1026 325 Gp,
Myh7 1082 322 GP,Myl2 1135 319 PP,Myoz2 964 344 Ep,Cald1 1134 353 Yb,Myom1 807 364 YB,Mybpc3 856 369 YP,
Tcap 906 365 PP,Asb2 966 374 EB,Adprhl1 1029 363 Eb,Actc1 1079 361 GP,Slc8a1 799 397 GP,Pln 850 401 GP,
Lmod2 903 402 GP,Myl12b 958 406 Eb,Ldb3 1008 406 GP,Cap2 1057 403 YP,Nebl 1116 389 Eb,Srl 1122 419 Gp,
Ttn 818 430 GP,Ppp1r14c 888 433 EB,Csrp3 943 443 GP,Tpm1 997 440 YP,Atp2a2 1054 443 GP,Cav3 1110 454 Gp,
Casq2 835 463 Cp,Unc45b 888 463 Gb,Ankrd1 937 474 GP,Pygm 995 477 CP,Ryr2 1051 476 GP,
Hand2 1314 190 PP,Id2 1377 217 Pb,Gata6 1260 227 VP,Nkx2-5 1255 271 PP,Hey2 1386 266 RP,Tbx20 1284 311 PP,
Gata4 1351 308 PP,Vcan 1504 243 Pp,App 1558 243 CP,Qk 1608 240 Ep,Itga5 1487 273 Rb,Dcn 1541 273 RP,
Parva 1593 275 RP,Hif1a 1642 274 RP,Lpl 1500 307 EP,Col1a1 1557 306 GP,Postn 1614 308 RP,Lims1 1495 344 EP,
Tmsb4x 1554 342 YP,Col3a1 1604 339 RP,Cpt1b 1494 375 EB,Tns1 1551 374 VP,Col18a1 1611 372 RP,
Rpl14 1299 444 Eb,Rps24 1354 441 Eb,Tmpo 1419 446 EB,Bzw1 1372 470 Eb,Grb10 1479 462 Eb,Rad23b 1534 464 Eb,
Ssr3 1269 491 Eb,Gnb2l1 1318 482 Vb,Lmnb1 1428 482 Vb,Igf2r 1494 494 EP,Igf2 1394 514 EP,Sae1 1446 510 Vb,
Psmd7 1473 534 Eb,Dctn6 1537 529 Yb,Txndc5 1243 526 EP,Fhl2 1295 529 GP,Ctnna1 1375 545 YP,Mki67 1424 554 VB,
Dync1i2 1475 562 Yb,Pafah1b1 1540 571 YB,Synpo2l 1267 560 YB,Csnk1a1 1316 560 VP,Cbx5 1248 591 EB,
Rbpms 1296 591 EB,Igfbp5 1349 594 Eb,Ctnnd1 1410 591 EB,Ctnnb1 1473 593 VP,Arpc2 1533 600 Yb,Ptov1 1258 619 Eb,
Prkar1a 1304 627 PP,Sept7 1364 628 YB,Sfrp1 1421 626 VP,Smyd2 1479 627 EP,Lrrfip1 1530 633 Yb,
Zmynd11 1323 663 Eb,Ppp2r3a 1378 663 VB,Epb4.1l3 1437 663 Yb,Ccdc141 1486 660 Eb,
Srsf7 1136 529 Eb,Adnp 1127 567 Eb,Ergic1 1165 617 Eb,Anxa6 792 572 Gp,Hspa9 853 571 Rb,Mmd 798 605 Eb,
Mmadhc 863 605 EB,Vdac3 925 590 Cb,Mdh1 994 590 EB,Atp5o 992 624 CB,Ndufa10 1052 641 EB,Stk39 862 648 Cp,
Mrpl33 927 648 Eb,Atp6v0e 990 656 CB`.split(",").map(s => {
  const [name, x, y, st] = s.trim().split(" ");
  return { name, x: +x, y: +y, fill: st[0], border: st[1] };
});

const LINKS = `Hspa9: Anxa6 Vdac3
Mmadhc: Mmd Vdac3
Vdac3: Pygm Atp5o
Atp5o: Mdh1 Mrpl33 Atp6v0e Ndufa10 Rbpms
Stk39: Mrpl33
Ergic1: Prkar1a
Adnp: Cbx5
Srsf7: Cap2 Actc1 Unc45b Ankrd1 Casq2 Synpo2l Txndc5 Ptov1
Hand2: Gata6 Nkx2-5 Tbx20 Gata4 Hey2 Myh6 Nppb
Gata6: Nkx2-5 Tbx20 Gata4 Gja1 Nppb Myh6
Nkx2-5: Tbx20 Gata4 Hey2 Id2 Myh6 Gja5 Gja1 Actc1 Nppb Myl2 Ankrd1 Smyd1 Actn2 Csrp3
Tbx20: Gata4 Gja5 Actc1 Nppb Myh7 Myh6 Myl2 Pln Srl
Gata4: Id2 Hey2 Myh6 Myh7 Gja1 Nppb Actc1 Myl2 Csrp3 Ankrd1 Des Atp2a2 Tcap
Hey2: Nppb Gja1 Myh6 Itga5 Dcn Parva
Id2: Vcan Hey2 App Gata4
Vcan: Dcn App Nkx2-5 Gja1 Lpl
App: Qk Parva Lpl Cpt1b Gata6
Itga5: Dcn Parva Col1a1 Col3a1 Col18a1 Lpl Hif1a Des Atp2a2 Lims1
Dcn: Parva Col1a1 Col3a1 Postn Tmsb4x
Hif1a: Parva Col18a1 Tns1 Cpt1b Myh6
Col1a1: Postn Col3a1 Col18a1 Lims1 Cpt1b Tmsb4x
Postn: Col3a1 Col18a1
Lims1: Parva Actn2 Cpt1b Tns1
Cpt1b: Lpl Pln Cox8b Actc1 Ldb3 Cav3 Myl2 Mb Ctnna1 Igf2 Tmpo Nebl Tns1
Tns1: Parva Igf2r Csnk1a1 Qk
Lpl: Cav3 Cald1 Igf2
Col18a1: Ctnnb1
Rpl14: Rps24 Ssr3 Gnb2l1 Bzw1 Mb Trim63
Rps24: Gnb2l1 Bzw1 Ctnnb1 Myl2 Col1a1
Tmpo: Lmnb1 Mki67 Gata4 Hey2
Bzw1: Igfbp5 Tns1
Grb10: Igf2r Ctnnb1 Gata4
Rad23b: Psmd7 Lmnb1
Gnb2l1: Bzw1 Igf2 Ctnnb1 Lmnb1
Lmnb1: Sae1 Mki67 Ctnnb1
Igf2: Igfbp5 Igf2r Ctnna1 Rbpms Sfrp1
Sae1: Psmd7 Mki67
Dctn6: Dync1i2 Pafah1b1 Ctnnb1
Dync1i2: Pafah1b1 Rbpms
Mki67: Ctnnb1 Csnk1a1
Ctnna1: Ctnnd1 Ctnnb1 Fhl2 Actn2 Ttn Cav3
Ctnnd1: Ctnnb1 Actc1
Ctnnb1: Sfrp1 Smyd2 Csnk1a1 Igfbp5 Arpc2 Lrrfip1 Cav3 Gja1 Ldb3 Nkx2-5 Fhl2
Fhl2: Txndc5 Cbx5 Actc1 Nebl Myh7 Cald1
Synpo2l: Csnk1a1 Cav3 Csrp3 Srl
Csnk1a1: Rbpms Ryr2 Prkar1a Myl2
Txndc5: Ssr3 Atp2a2 Cald1 Adprhl1
Prkar1a: Ryr2 Sept7 Ppp2r3a
Cbx5: Rbpms Zmynd11 Csrp3
Zmynd11: Smyd2
Ptov1: Rbpms
Igfbp5: Sept7 Actc1
Ctnna1: Epb4.1l3 Igfbp5
Rbpms: Ccdc141 Lmod2
Smyd2: Ctnnd1 Nebl`;

const HUBS = "Myh6 Myh7 Actn2 Des Ttn Tcap Ldb3 Myoz2 Actc1 Mb Csrp3 Myl2 Pln Ryr2 Lmod2 Mybpc3 Trim63 Myl9 Asb2".split(" ");
const CORE = NODES.slice(0, 53);
const byName = Object.fromEntries(NODES.map(n => [n.name, n]));
const edges = [];
LINKS.split("\n").forEach(l => {
  const [a, rest] = l.split(": ");
  rest.split(" ").forEach(b => edges.push([byName[a], byName[b]]));
});
HUBS.forEach((h, i) => CORE.forEach((n, j) => {
  if ((i * 11 + j * 7) % 5 < 3 && n.name !== h) edges.push([byName[h], n]);
}));

const FILL = { G: "#9aff55", C: "#55ffff", Y: "#ffff9a", P: "#ffdddd", E: "#dddddd", R: "#ff5577", V: "#9a9aff" };
const LINE = { p: "#ff1744", b: "#0a96cf" };
const NS = "http://www.w3.org/2000/svg";

function add(parent, tag, attrs, text) {
  const el = document.createElementNS(NS, tag);
  for (const k in attrs) el.setAttribute(k, attrs[k]);
  if (text) el.textContent = text;
  parent.appendChild(el);
}
function box(svg, n, w, h, attrs) {
  add(svg, "rect", { x: n.x - w / 2, y: n.y - h / 2, width: w, height: h, ...attrs });
}
function draw(svg, labels) {
  edges.forEach(([a, b]) => add(svg, "line", {
    x1: a.x, y1: a.y, x2: b.x, y2: b.y, stroke: "#666", "stroke-width": 0.8,
    "stroke-dasharray": "2 1.5", "stroke-opacity": labels ? 0.42 : 0.22
  }));
  NODES.forEach(n => {
    const c = LINE[n.border.toLowerCase()];
    const dbl = n.border === n.border.toUpperCase();
    if (dbl) {
      box(svg, n, 43, 25, { rx: 4, fill: "#fff", "fill-opacity": 0.6 });
      box(svg, n, 38, 20, { rx: 1, fill: FILL[n.fill], "fill-opacity": 0.75 });
      box(svg, n, 40, 22, { rx: 3, fill: "none", stroke: c, "stroke-width": 2, "stroke-opacity": 0.22 });
      box(svg, n, 43, 25, { rx: 4, fill: "none", stroke: c, "stroke-width": 1.5, "stroke-opacity": 0.6 });
      box(svg, n, 37, 19, { rx: 1, fill: "none", stroke: c, "stroke-width": 1, "stroke-opacity": 0.55 });
    } else {
      box(svg, n, 41, 23, { rx: 3, fill: FILL[n.fill], "fill-opacity": 0.75 });
      box(svg, n, 41, 23, { rx: 3, fill: "none", stroke: c, "stroke-width": 2, "stroke-opacity": 0.75 });
    }
    if (labels) add(svg, "text", { x: n.x, y: n.y + 4, class: "nodelabel" }, n.name);
    else box(svg, n, 20, 5, { fill: "#333", "fill-opacity": 0.5 });
  });
}
draw(document.getElementById("graph"), true);
const bird = document.getElementById("birdseye");
draw(bird, false);
// visible part of the network
add(bird, "rect", { x: 506, y: 110, width: 1414, height: 627, fill: "#0078d7", "fill-opacity": 0.235 });
```
